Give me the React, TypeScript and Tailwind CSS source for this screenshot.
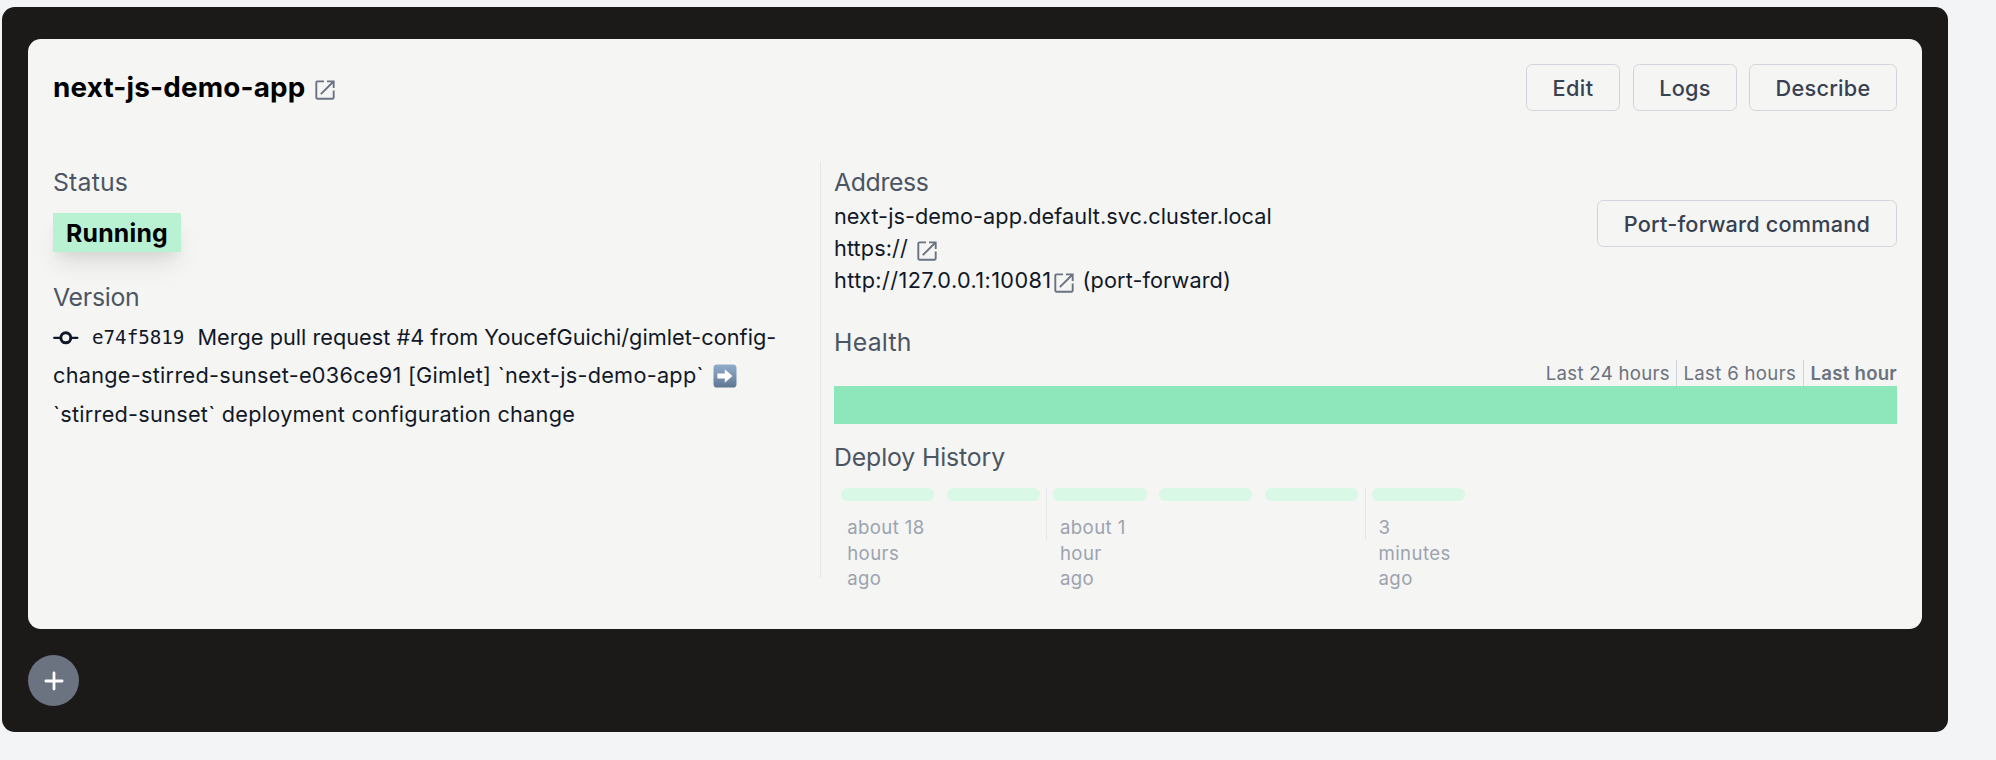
import type { ReactNode } from 'react';

function ExternalIcon({ className = '' }: { className?: string }) {
  return (
    <svg viewBox="0 0 20 20" className={`h-5 w-5 shrink-0 text-gray-500 ${className}`} fill="none" stroke="currentColor" strokeWidth="1.9">
      <path d="M9 1.4H2.4a1.1 1.1 0 0 0-1.1 1.1v15.1a1.1 1.1 0 0 0 1.1 1.1h15.2a1.1 1.1 0 0 0 1.1-1.1V10.4" />
      <path d="M12 1.4h6.7V8M5.8 14.2 18 2" />
    </svg>
  );
}

function CommitIcon() {
  return (
    <svg viewBox="0 0 26 20" className="mr-[13px] h-5 w-[26px] shrink-0" fill="none" stroke="currentColor">
      <circle cx="12.8" cy="10.8" r="5" strokeWidth="3" />
      <path d="M1.2 10.8h6M18.4 10.8h6" strokeWidth="2.3" strokeLinecap="round" />
    </svg>
  );
}

function ArrowBadge() {
  return (
    <svg viewBox="0 0 24 24" className="mt-px ml-[9.5px] h-6 w-6 shrink-0">
      <defs>
        <linearGradient id="badge" x1="0" y1="0" x2="0" y2="1">
          <stop offset="0" stopColor="#8faccb" />
          <stop offset="0.5" stopColor="#7b93b1" />
          <stop offset="1" stopColor="#5f7690" />
        </linearGradient>
      </defs>
      <rect x="0.5" y="0.5" width="23" height="23" rx="3.6" fill="url(#badge)" />
      <path d="M4.4 9.6h7.4V5.2l7.6 6.8-7.6 6.8v-4.4H4.4z" fill="#fff" />
    </svg>
  );
}

function Button({ children, className }: { children: ReactNode; className: string }) {
  return (
    <button className={`h-[47px] shrink-0 rounded-[6.4px] border border-[#d1d5db] pt-px text-center text-[21.7px] font-medium whitespace-nowrap text-[#374151] ${className}`}>
      {children}
    </button>
  );
}

function Heading({ children, className = '' }: { children: ReactNode; className?: string }) {
  return <h3 className={`h-9 text-[24.8px] leading-9 text-[#4b5563] ${className}`}>{children}</h3>;
}

const deploys = [
  { label: 'about 18 hours ago', divider: false },
  { label: '', divider: false },
  { label: 'about 1 hour ago', divider: true },
  { label: '', divider: false },
  { label: '', divider: false },
  { label: '3 minutes ago', divider: true },
];

export default function App() {
  return (
    <div className="h-[760px] overflow-hidden bg-[#f3f4f6] pt-[7px] pl-[2px] font-['Inter',sans-serif]">
      <div className="h-[725px] w-[1946px] rounded-[12.8px] bg-[#1b1a18] px-[26px] pt-8">
        <section className="h-[590px] w-[1894px] rounded-[12.8px] bg-[#f5f5f3] px-[25px] pt-[25px]">
          <header className="flex h-[47px] items-center">
            <h2 className="flex items-center pb-[2px] text-[27.8px] leading-9 font-bold tracking-[0.2px] text-black">
              next-js-demo-app
              <ExternalIcon className="mt-[6px] ml-[9px]" />
            </h2>
            <div className="ml-auto flex">
              <Button className="mr-[13px] w-[94px] tracking-[0.45px]">Edit</Button>
              <Button className="mr-[12px] w-[104px] tracking-[0.3px]">Logs</Button>
              <Button className="w-[148px] tracking-[0.25px]">Describe</Button>
            </div>
          </header>

          <div className="mt-[51px] flex h-[416px] text-[21.7px] text-[#111827]">
            <div className="w-[767px] pt-[2px]">
              <Heading className="tracking-[0.2px]">Status</Heading>
              <div className="mt-[13px] flex h-[39px] w-[128px] items-center justify-center bg-[#b9f1d3] pt-[2px] text-[24.8px] font-bold tracking-[0.2px] text-black shadow-[0_16px_24px_-5px_rgba(0,0,0,0.1),0_6px_10px_-3px_rgba(0,0,0,0.06)]">
                Running
              </div>
              <Heading className="mt-[27px] tracking-[-0.25px]">Version</Heading>
              <div className="mt-[3px] leading-[38.4px] whitespace-nowrap">
                <div className="flex items-center">
                  <CommitIcon />
                  <span className="mt-px -mb-px mr-[13px] font-['DejaVu_Sans_Mono',monospace] text-[19.2px]">e74f5819</span>
                  <span className="tracking-[0.02px]">Merge pull request #4 from YoucefGuichi/gimlet-config-</span>
                </div>
                <div className="flex items-center">
                  <span className="tracking-[0.27px]">change-stirred-sunset-e036ce91 [Gimlet] `next-js-demo-app`</span>
                  <ArrowBadge />
                </div>
                <div className="tracking-[0.26px]">`stirred-sunset` deployment configuration change</div>
              </div>
            </div>

            <div className="w-[1077px] border-l border-[#e5e7eb] pt-[2px] pl-[13px]">
              <div className="flex justify-between">
                <div className="leading-8 whitespace-nowrap">
                  <Heading className="tracking-[-0.35px]">Address</Heading>
                  <div className="tracking-[0.05px]">next-js-demo-app.default.svc.cluster.local</div>
                  <div className="flex h-8 items-center">
                    <span className="tracking-[0.1px]">https://</span>
                    <ExternalIcon className="mt-[5px] ml-[9px]" />
                  </div>
                  <div className="flex h-8 items-center">
                    <span className="tracking-[0.4px]">http://127.0.0.1:10081</span>
                    <ExternalIcon className="mt-[5px] ml-[2px]" />
                    <span className="ml-[9px] tracking-[0.1px]">(port-forward)</span>
                  </div>
                </div>
                <Button className="mt-9 w-[300px] tracking-[0.2px]">Port-forward command</Button>
              </div>

              <Heading className="mt-7 tracking-[0.25px]">Health</Heading>
              <div className="flex h-[26px] justify-end text-[18.6px] leading-[26px] text-[#6b7280]">
                <span className="pr-[6px] tracking-[0.3px]">Last 24 hours</span>
                <span className="border-l border-[#d1d5db] px-[6.5px] tracking-[0.32px]">Last 6 hours</span>
                <span className="border-l border-[#d1d5db] pl-[7px] font-semibold tracking-[0.25px]">Last hour</span>
              </div>
              <div className="h-[38px] bg-[#8ee6bb]" />

              <Heading className="mt-[15px] tracking-[-0.13px]">Deploy History</Heading>
              <div className="mt-[13px] grid grid-cols-[repeat(10,106.2px)]">
                {deploys.map((d, i) => (
                  <div key={i} className={d.divider ? 'h-[52px] border-l border-[#e5e7eb] px-[6px]' : 'h-[52px] px-[6.6px]'}>
                    <div className="h-[13px] rounded-[6.4px] bg-[#d9f8e6]" />
                    <div className="mt-[14px] pr-[6px] pl-[6.6px] text-[18.6px] leading-[25.6px] tracking-[0.4px] text-[#9ca3af]">{d.label}</div>
                  </div>
                ))}
              </div>
            </div>
          </div>
        </section>

        <button aria-label="Add" className="mt-[26px] flex h-[51px] w-[51px] items-center justify-center rounded-full bg-[#6b7280]">
          <svg viewBox="0 0 20 20" className="h-5 w-5" fill="none" stroke="#fff" strokeWidth="2.8" strokeLinecap="round">
            <path d="M10 1.9v16.2M1.9 10h16.2" />
          </svg>
        </button>
      </div>
    </div>
  );
}
